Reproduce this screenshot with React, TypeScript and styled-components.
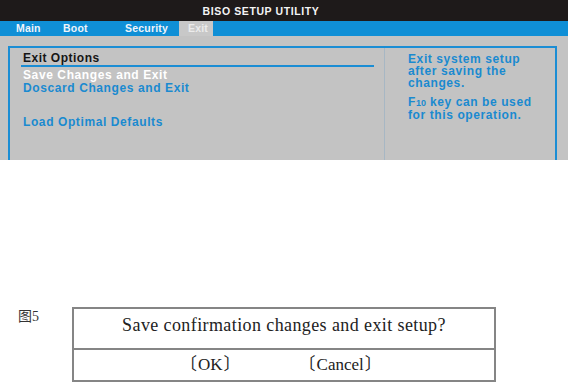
import React from 'react';
import styled, { createGlobalStyle } from 'styled-components';

const GlobalStyle = createGlobalStyle`
	html, body {
		margin: 0;
		padding: 0;
		background: #fff;
	}
	body {
		font-family: 'Liberation Sans', Arial, sans-serif;
	}
`;

const tabs = [
	{ label: 'Main', width: 47 },
	{ label: 'Boot', width: 62 },
	{ label: 'Security', width: 54 },
	{ label: 'Exit', width: 34, active: true },
];

const App: React.FC = () => {
	return (
		<>
			<GlobalStyle />
			<Page>
				<Bios>
					<TitleBar>BISO SETUP UTILITY</TitleBar>
					<TabBar>
						{tabs.map((tab) => (
							<Tab key={tab.label} $width={tab.width} $active={!!tab.active}>
								{tab.label}
							</Tab>
						))}
					</TabBar>
					<Body>
						<Frame>
							<Options>
								<Heading>Exit Options</Heading>
								<Rule />
								<Item $selected>Save Changes and Exit</Item>
								<Item>Doscard Changes and Exit</Item>
								<Item $gap={22}>Load Optimal Defaults</Item>
							</Options>
							<Help>
								<HelpText>
									Exit system setup
									<br />
									after saving the
									<br />
									changes.
								</HelpText>
								<HelpText>
									F<small>10</small> key can be used
									<br />
									for this operation.
								</HelpText>
							</Help>
						</Frame>
					</Body>
				</Bios>
				<Figure>
					<Caption>图5</Caption>
					<Dialog>
						<Question>Save confirmation changes and exit setup?</Question>
						<Actions>
							<Action>
								<Bracket $side="left">〔</Bracket>OK<Bracket $side="right">〕</Bracket>
							</Action>
							<Action>
								<Bracket $side="left">〔</Bracket>Cancel<Bracket $side="right">〕</Bracket>
							</Action>
						</Actions>
					</Dialog>
				</Figure>
			</Page>
		</>
	);
};

const Page = styled.div`
	display: flex;
	flex-direction: column;
	width: 568px;
	height: 389px;
`;

const Bios = styled.div`
	display: flex;
	flex-direction: column;
	height: 160px;
	background: #c3c3c3;
`;

const TitleBar = styled.div`
	height: 21px;
	padding-right: 46px;
	background: #1e1a1a;
	color: #f4f4f4;
	font-size: 10.5px;
	font-weight: 700;
	letter-spacing: 0.6px;
	line-height: 23px;
	text-align: center;
`;

const TabBar = styled.div`
	display: flex;
	height: 15px;
	padding-left: 16px;
	background: #0f8fd6;
`;

const Tab = styled.div<{ $width: number; $active: boolean }>`
	width: ${(p) => p.$width}px;
	padding-left: ${(p) => (p.$active ? 9 : 0)}px;
	box-sizing: border-box;
	background: ${(p) => (p.$active ? '#c8c8c8' : 'transparent')};
	color: ${(p) => (p.$active ? '#ececec' : '#eef4fa')};
	font-size: 10.5px;
	font-weight: 700;
	letter-spacing: 0.2px;
	line-height: 15px;
	white-space: nowrap;
`;

const Body = styled.div`
	flex: 1;
	display: flex;
	padding: 10px 11px 0 8px;
	min-height: 0;
`;

const Frame = styled.div`
	flex: 1;
	display: grid;
	grid-template-columns: 375px 1fr;
	border: 2px solid #1a8dd4;
	border-bottom: none;
`;

const Options = styled.div`
	display: flex;
	flex-direction: column;
	padding: 3px 0 0 13px;
	border-right: 1px solid #a7b7c4;
`;

const Heading = styled.div`
	color: #161616;
	font-size: 12px;
	font-weight: 700;
	letter-spacing: 0.5px;
	line-height: 14px;
`;

const Rule = styled.div`
	height: 2px;
	margin: 0 10px 2px -2px;
	background: #1a8dd4;
`;

const Item = styled.div<{ $selected?: boolean; $gap?: number }>`
	margin-top: ${(p) => p.$gap ?? 0}px;
	color: ${(p) => (p.$selected ? '#ffffff' : '#1a8ad0')};
	font-size: 12px;
	font-weight: 700;
	letter-spacing: 0.6px;
	line-height: 12.5px;
`;

const Help = styled.div`
	display: flex;
	flex-direction: column;
	gap: 7px;
	padding: 5px 0 0 23px;
`;

const HelpText = styled.div`
	color: #1a8ad0;
	font-size: 12px;
	font-weight: 700;
	letter-spacing: 0.6px;
	line-height: 12px;

	small {
		font-size: 9px;
		letter-spacing: 0;
	}
`;

const Figure = styled.div`
	display: flex;
	margin-top: 147px;
`;

const Caption = styled.div`
	width: 72px;
	box-sizing: border-box;
	padding: 2px 0 0 18px;
	color: #333;
	font-family: 'Liberation Serif', 'Noto Sans CJK SC', serif;
	font-size: 14px;
	line-height: 15px;
`;

const Dialog = styled.div`
	width: 424px;
	display: flex;
	flex-direction: column;
	border: 2px solid #858585;
	box-sizing: border-box;
	color: #222;
	font-family: 'Liberation Serif', 'Noto Sans CJK SC', serif;
`;

const Question = styled.div`
	height: 39px;
	border-bottom: 2px solid #858585;
	font-size: 18px;
	letter-spacing: 0.4px;
	line-height: 33px;
	text-align: center;
`;

const Actions = styled.div`
	display: flex;
	gap: 70px;
	height: 30px;
	padding-left: 112px;
	font-size: 17px;
	line-height: 30px;
`;

const Action = styled.div`
	display: flex;
	white-space: nowrap;
`;

const Bracket = styled.span<{ $side: 'left' | 'right' }>`
	margin-left: ${(p) => (p.$side === 'left' ? -6 : 1)}px;
	margin-right: ${(p) => (p.$side === 'right' ? -6 : 1)}px;
`;

export default App;
